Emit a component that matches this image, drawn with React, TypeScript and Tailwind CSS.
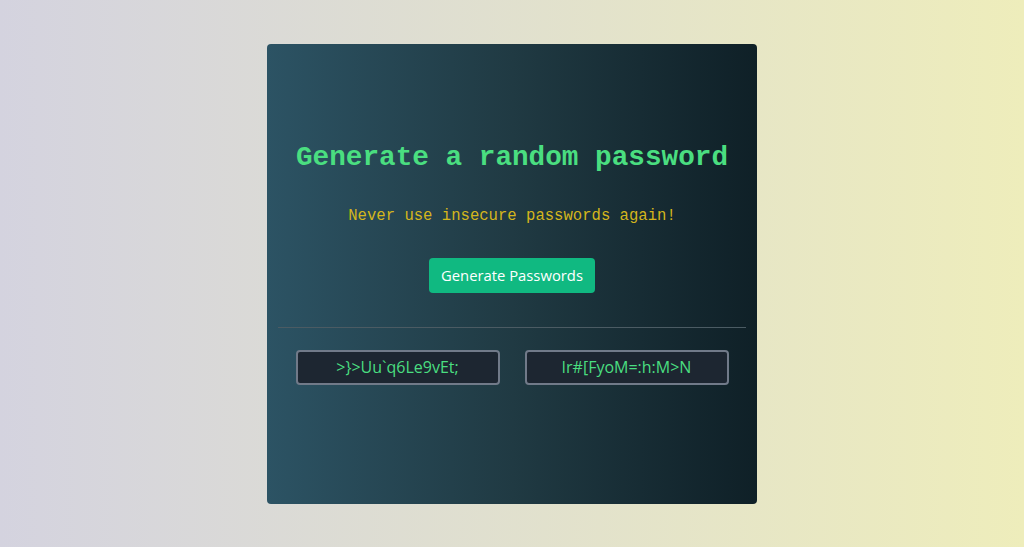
export default function App() {
  const passwords = [">}>Uu`q6Le9vEt;", "Ir#[FyoM=:h:M>N"];

  return (
    <div className="flex min-h-screen items-center justify-center bg-gradient-to-r from-[#d4d3df] to-[#eeedbb]">
      <div className="flex h-[460px] w-[490px] flex-col items-center rounded-[4px] bg-gradient-to-r from-[#2c5364] via-[#203a43] to-[#0f2027] px-[11px] pt-[96px]">
        <h1 className="whitespace-nowrap font-['Liberation_Mono',monospace] text-[27.7px] leading-[36px] font-bold text-[#4ade80]">
          Generate a random password
        </h1>

        <p className="mt-[28px] whitespace-nowrap font-['Liberation_Mono',monospace] text-[15.6px] leading-[24px] text-[#d4b61c]">
          Never use insecure passwords again!
        </p>

        <button
          type="button"
          className="mt-[30px] h-[35px] w-[166px] rounded-[4px] bg-[#10b981] font-['Open_Sans',sans-serif] text-[14.8px] text-white"
        >
          Generate Passwords
        </button>

        <div className="mt-[34px] h-px w-full bg-[#4b5b63]" />

        <div className="mt-[22px] flex gap-[25px]">
          {passwords.map((pw) => (
            <div
              key={pw}
              className="flex h-[35px] w-[204px] items-center justify-center rounded-[4px] border-2 border-[#717a89] bg-[#1d2631] font-['Open_Sans',sans-serif] text-[16px] text-[#4ade80]"
            >
              {pw}
            </div>
          ))}
        </div>
      </div>
    </div>
  );
}
